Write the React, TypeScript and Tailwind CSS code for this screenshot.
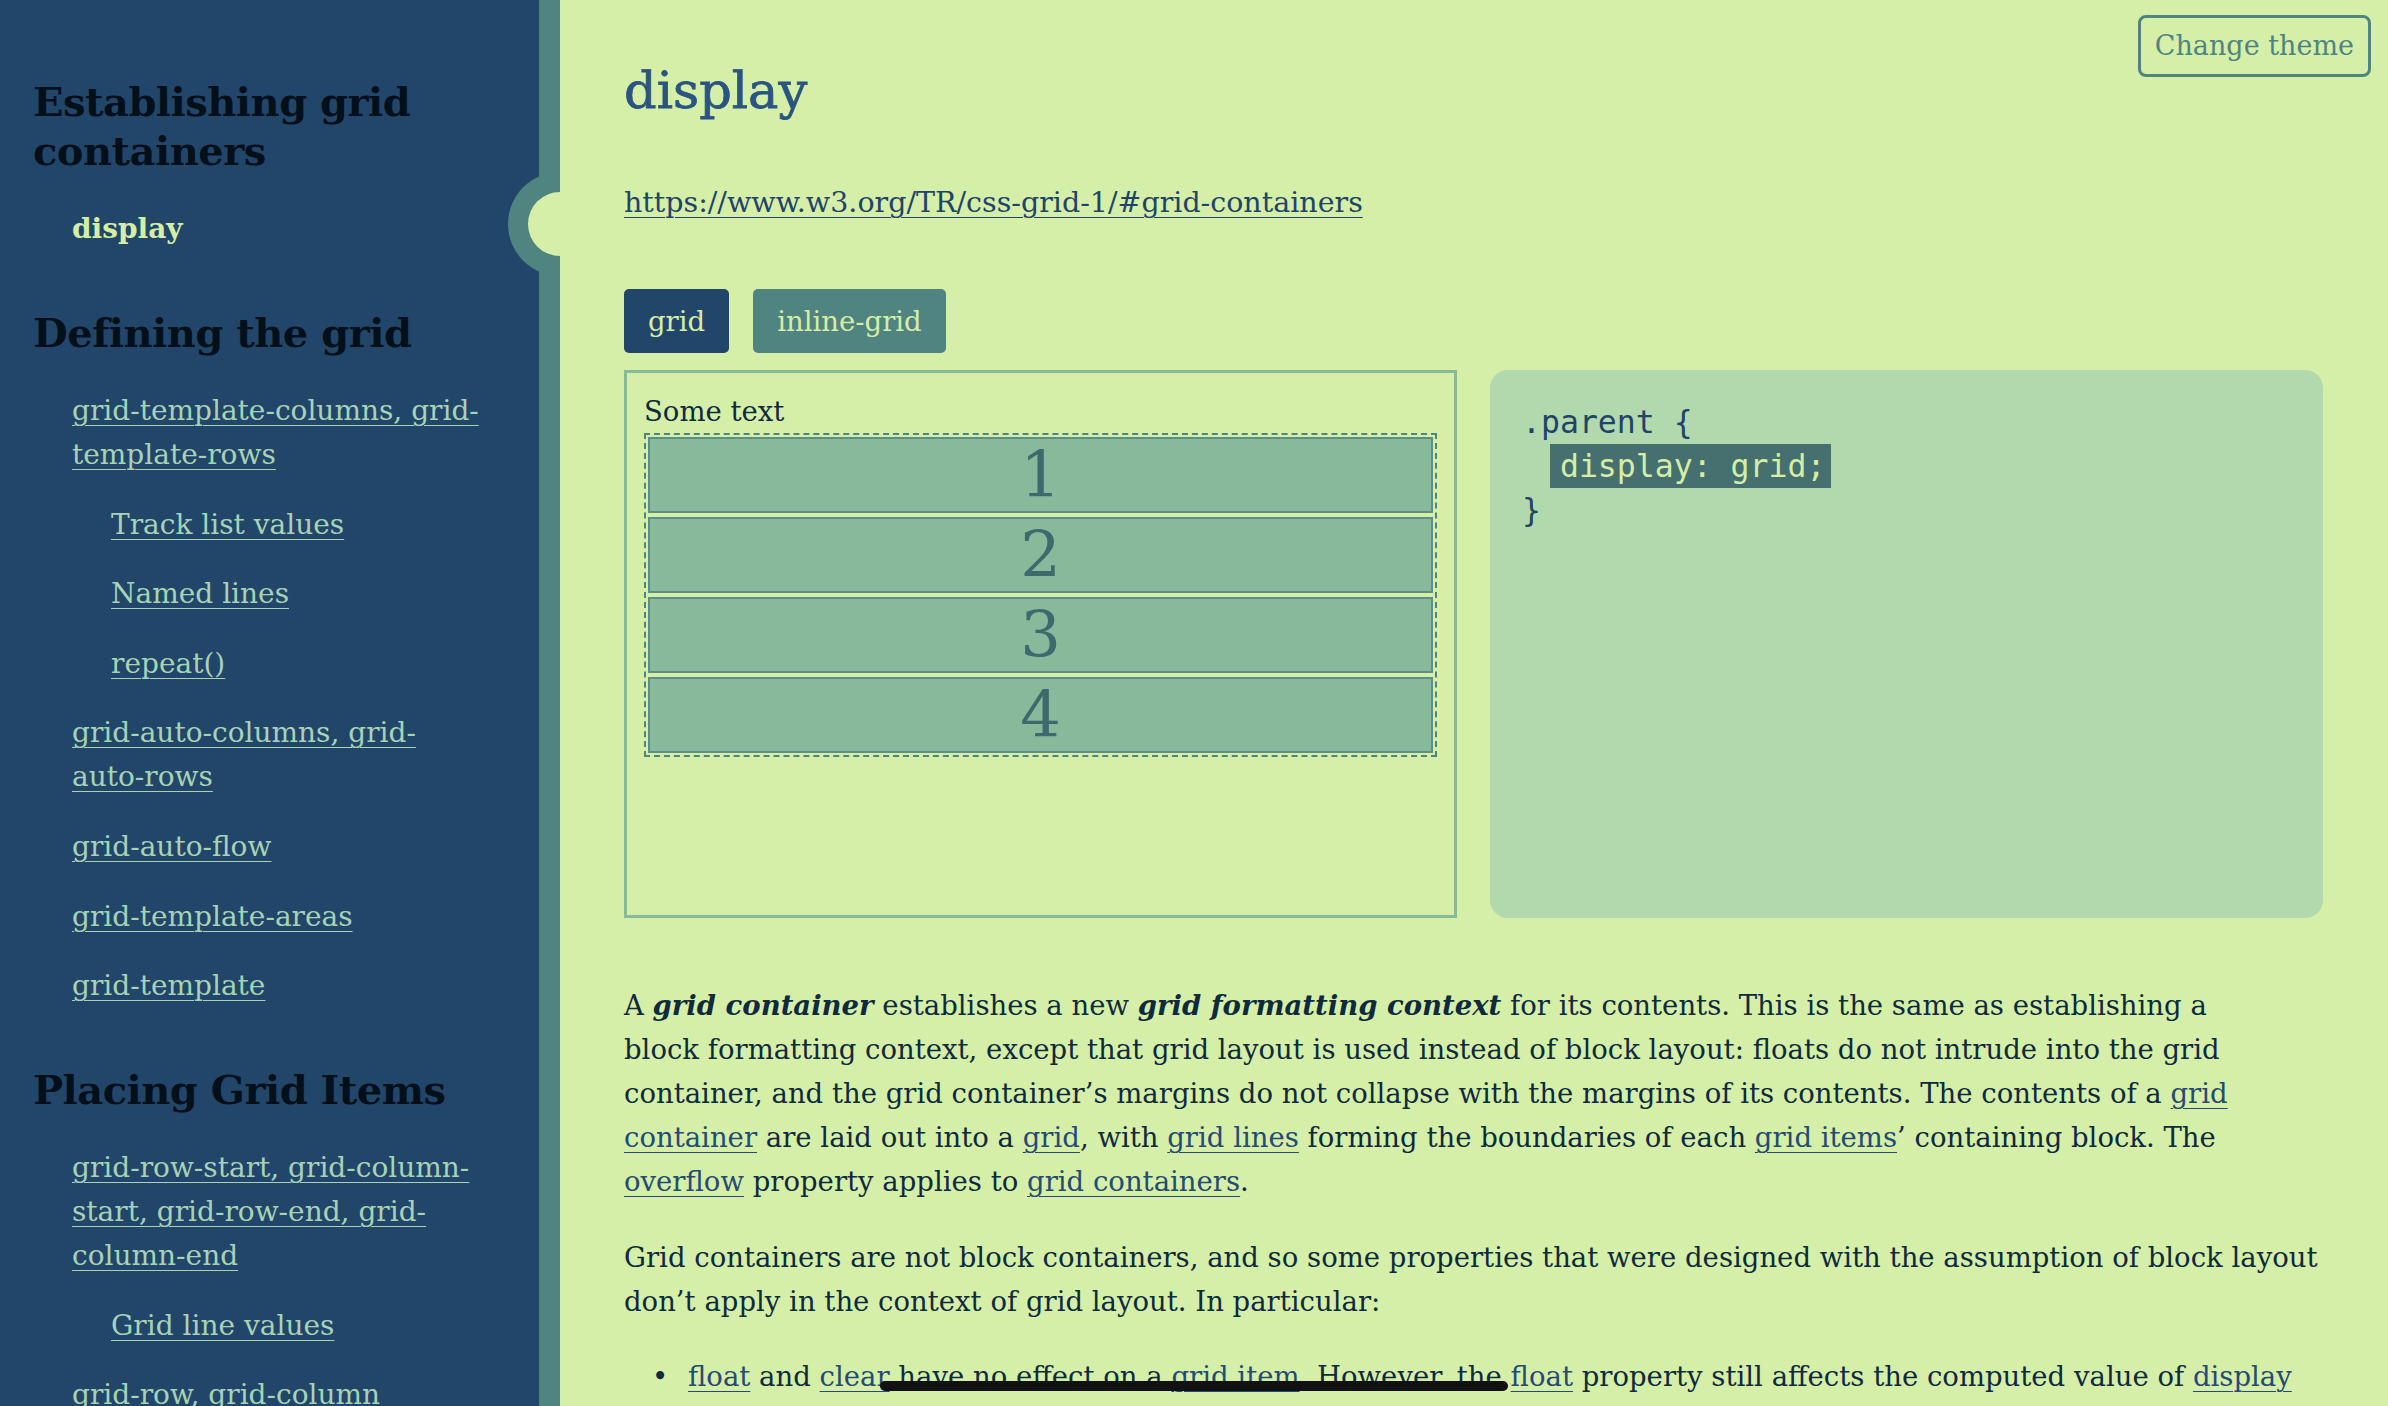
type NavItem = { label: string; sub?: boolean; active?: boolean }
type NavSection = { title: string; items: NavItem[] }

const nav: NavSection[] = [
  {
    title: 'Establishing grid containers',
    items: [{ label: 'display', active: true }],
  },
  {
    title: 'Defining the grid',
    items: [
      { label: 'grid-template-columns, grid-template-rows' },
      { label: 'Track list values', sub: true },
      { label: 'Named lines', sub: true },
      { label: 'repeat()', sub: true },
      { label: 'grid-auto-columns, grid-auto-rows' },
      { label: 'grid-auto-flow' },
      { label: 'grid-template-areas' },
      { label: 'grid-template' },
    ],
  },
  {
    title: 'Placing Grid Items',
    items: [
      { label: 'grid-row-start, grid-column-start, grid-row-end, grid-column-end' },
      { label: 'Grid line values', sub: true },
      { label: 'grid-row, grid-column' },
      { label: 'grid-area' },
    ],
  },
]

function Sidebar() {
  return (
    <aside className="relative flex w-[560px] shrink-0">
      <nav className="flex w-[539px] flex-col bg-[#224669] pl-[33px] pr-[52px] pt-[77px]">
        {nav.map((section, i) => (
          <section key={section.title} className={i > 0 ? 'mt-[57px]' : ''}>
            <h2 className="font-['DejaVu_Serif',serif] text-[40px] leading-[49px] font-bold tracking-[-0.5px] text-[#03101a]">
              {section.title}
            </h2>
            <ul className="mt-[32px] flex flex-col gap-[25.6px] pl-[39px] font-['DejaVu_Serif',serif] text-[28px] leading-[44px]">
              {section.items.map((item) => (
                <li key={item.label} className={item.sub ? 'pl-[39px]' : ''}>
                  {item.active ? (
                    <span className="font-bold text-[#d5eea6]">{item.label}</span>
                  ) : (
                    <a
                      href="#"
                      className="text-[#a6d3b6] underline decoration-1 underline-offset-[5px]"
                    >
                      {item.label}
                    </a>
                  )}
                </li>
              ))}
            </ul>
          </section>
        ))}
      </nav>
      <div className="w-[21px] bg-[#4f8481]" />
      {/* notch marking the current section: left halves only, opening into the page */}
      <div className="absolute left-[508px] top-[172px] z-10 h-[104px] w-[52px] rounded-l-full bg-[#4f8481]" />
      <div className="absolute left-[528px] top-[192px] z-10 h-[64px] w-[32px] rounded-l-full bg-[#d5efa8]" />
    </aside>
  )
}

const link = 'text-[#244b73] underline decoration-1 underline-offset-[5px]'

function Demo() {
  return (
    <div className="mt-[17px] grid h-[548px] grid-cols-2 gap-[33px]">
      <div className="border-[3px] border-[#88b99a] p-[17px] pt-[16px]">
        <div className="font-['DejaVu_Serif',serif] text-[27.5px] leading-[44px] text-[#0f2a3e]">
          Some text
        </div>
        <div className="grid gap-[4px] border-2 border-dashed border-[#4f8481] p-[2px]">
          {[1, 2, 3, 4].map((n) => (
            <div
              key={n}
              className="flex h-[76px] items-center justify-center border-2 border-[#5e8f87] bg-[#88b99a] font-['DejaVu_Serif',serif] text-[64px] leading-none text-[#3e6a6e]"
            >
              {n}
            </div>
          ))}
        </div>
      </div>
      <div className="rounded-[18px] bg-[#b1d9ad] px-[32px] pt-[30px]">
        <pre className="font-['DejaVu_Sans_Mono',monospace] text-[31.5px] leading-[44px] text-[#1f4468]">
          {'.parent {\n  '}
          <span className="-ml-[10px] inline-block bg-[#46706f] pl-[10px] pr-[6px] text-[#d5eea6]">
            display: grid;
          </span>
          {'\n}'}
        </pre>
      </div>
    </div>
  )
}

export default function App() {
  return (
    <div className="relative flex h-[1406px] overflow-hidden bg-[#d5efa8]">
      <Sidebar />
      <main className="min-w-0 flex-1 pl-16 pr-[65px] font-['DejaVu_Serif',serif] text-[27.5px] leading-[44px] text-[#0f2a3e]">
        <h1 className="mt-[61px] font-['DejaVu_Serif',serif] text-[51px] leading-[60px] text-[#2b5580] [-webkit-text-stroke:0.8px_#2b5580]">
          display
        </h1>
        <p className="mt-[60px] text-[28.5px]">
          <a href="#" className="text-[#1f4468] underline decoration-1 underline-offset-[5px]">
            https://www.w3.org/TR/css-grid-1/#grid-containers
          </a>
        </p>
        <div className="mt-[64px] flex gap-6">
          <button className="rounded-[5px] bg-[#224669] px-6 py-[10px] text-[#d5eea6]">grid</button>
          <button className="rounded-[5px] bg-[#4f8481] px-6 py-[10px] text-[#d5eea6]">
            inline-grid
          </button>
        </div>
        <Demo />
        <p className="mt-[65px]">
          A <b className="italic">grid container</b> establishes a new{' '}
          <b className="italic">grid formatting context</b> for its contents. This is the same as
          establishing a
          <br />
          block formatting context, except that grid layout is used instead of block layout: floats
          do not intrude into the grid container, and the grid container’s margins do not collapse
          with the margins of its contents. The contents of a{' '}
          <a href="#" className={link}>
            grid container
          </a>{' '}
          are laid out into a{' '}
          <a href="#" className={link}>
            grid
          </a>
          , with{' '}
          <a href="#" className={link}>
            grid lines
          </a>{' '}
          forming the boundaries of each{' '}
          <a href="#" className={link}>
            grid items
          </a>
          ’ containing block. The{' '}
          <a href="#" className={link}>
            overflow
          </a>{' '}
          property applies to{' '}
          <a href="#" className={link}>
            grid containers
          </a>
          .
        </p>
        <p className="mt-[32px]">
          Grid containers are not block containers, and so some properties that were designed with
          the assumption of block layout don’t apply in the context of grid layout. In particular:
        </p>
        <ul className="mt-[31px] pl-[28px]">
          <li className="flex">
            <span className="w-[36px] shrink-0">•</span>
            <span>
              <a href="#" className={link}>
                float
              </a>{' '}
              and{' '}
              <a href="#" className={link}>
                clear
              </a>{' '}
              have no effect on a{' '}
              <a href="#" className={link}>
                grid item
              </a>
              . However, the{' '}
              <a href="#" className={link}>
                float
              </a>{' '}
              property still affects the computed value of{' '}
              <a href="#" className={link}>
                display
              </a>{' '}
              on children of a grid container, as this occurs before grid items are determined.
            </span>
          </li>
        </ul>
      </main>
      <button className="absolute right-[17px] top-[15px] rounded-[8px] border-[3px] border-[#4f8481] px-[14px] py-[6px] font-['DejaVu_Serif',serif] text-[27px] leading-[44px] text-[#4f8481]">
        Change theme
      </button>
      {/* home indicator */}
      <div className="absolute bottom-[15px] left-[880px] h-[10px] w-[628px] rounded-full bg-[#111111]" />
    </div>
  )
}
